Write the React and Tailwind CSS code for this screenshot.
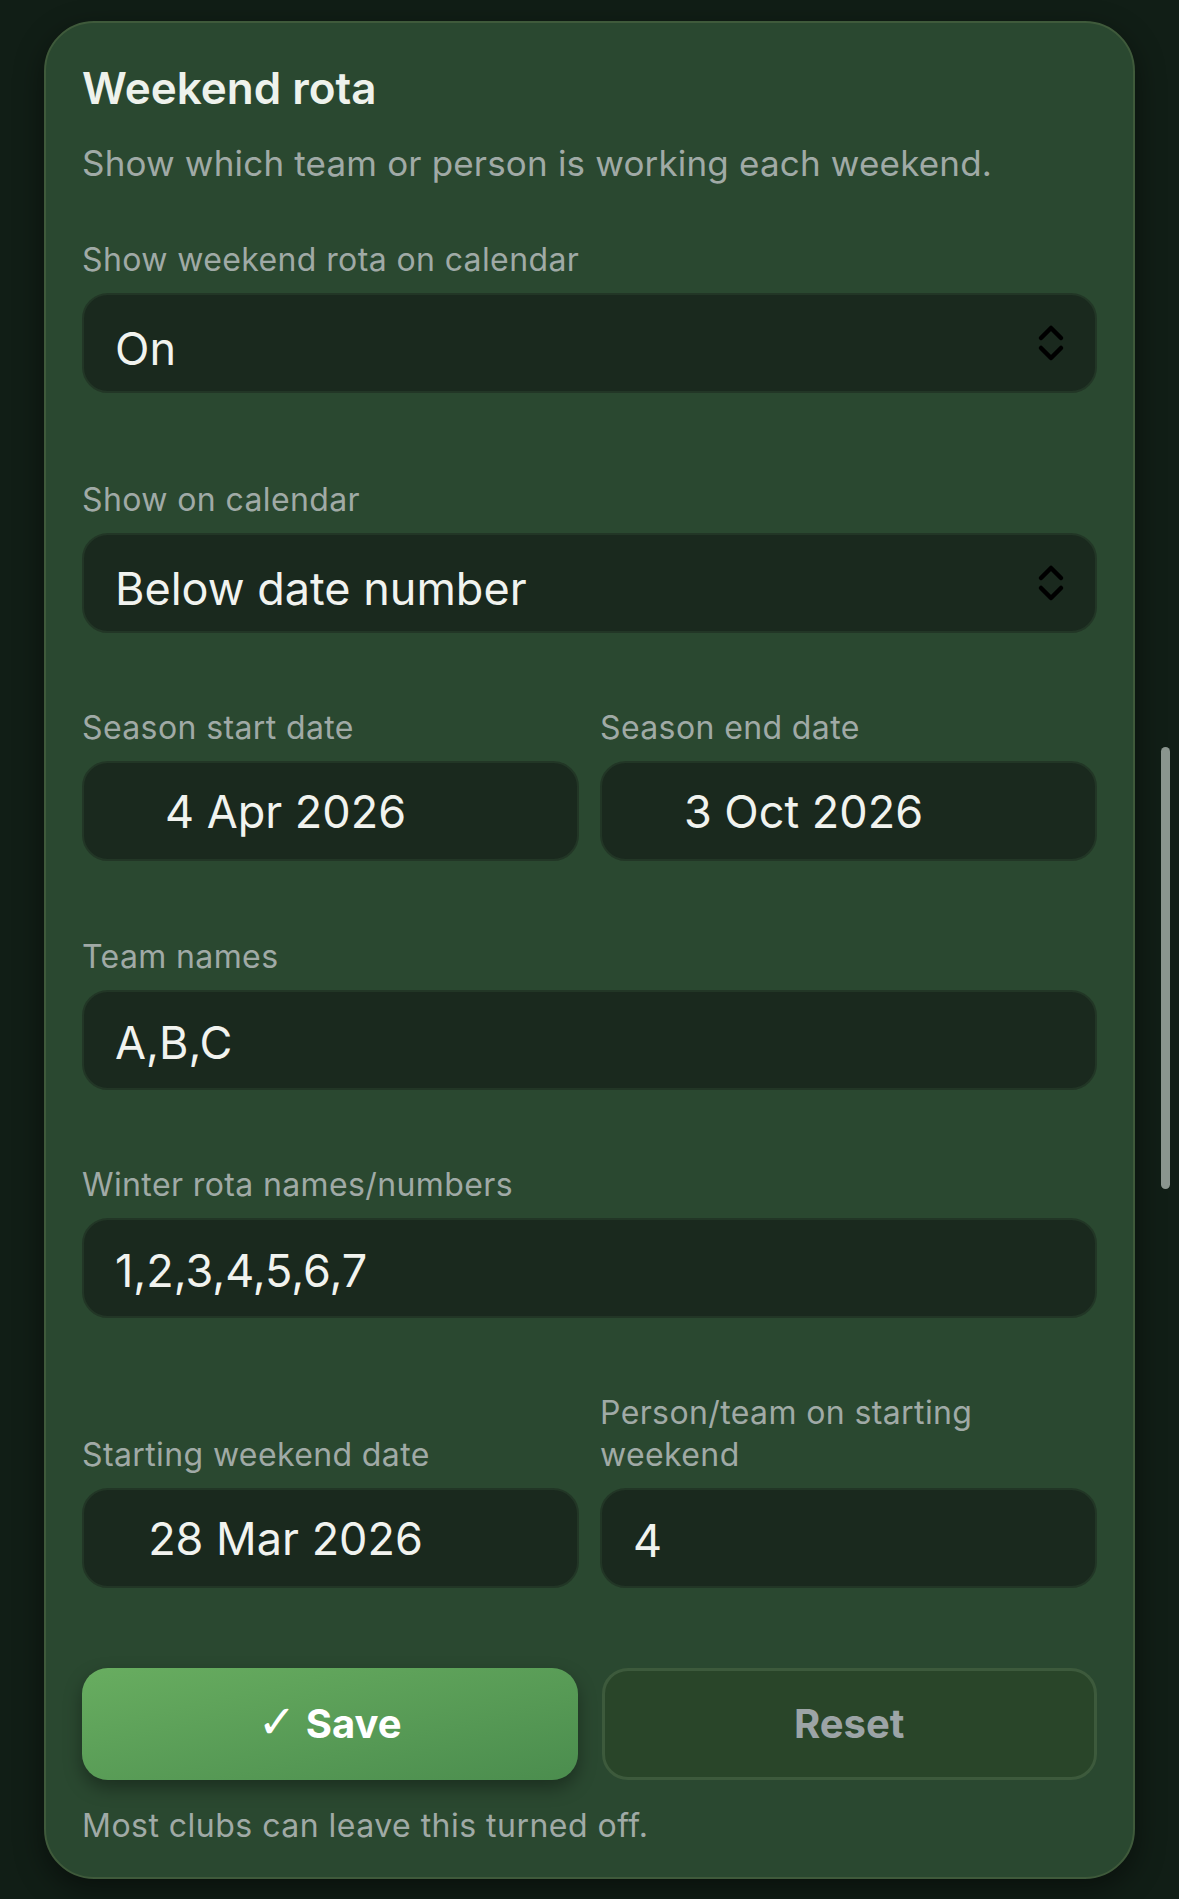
import React from 'react';

const Chevrons = () => (
  <svg width="28" height="42" viewBox="0 0 28 42" fill="none" stroke="#000" strokeWidth="4.5" strokeLinecap="round" strokeLinejoin="round">
    <path d="M4 16 L14 6 L24 16" />
    <path d="M4 26 L14 36 L24 26" />
  </svg>
);

const Label = ({ children, className = '' }) => (
  <div className={`text-[32px] leading-[42px] tracking-[0.012em] text-[#a0aaa6] ${className}`}>{children}</div>
);

const Box = ({ children, className = '' }) => (
  <div className={`h-[100px] rounded-[26px] bg-[#1a291e] border-2 border-[#223626] flex items-center text-[45px] text-[#f1f3ef] ${className}`}>
    {children}
  </div>
);

const SelectField = ({ label, value, className = '' }) => (
  <div className={className}>
    <Label>{label}</Label>
    <Box className="mt-[12px] pl-[31px] pr-[30px] justify-between">
      <span className="pt-[12px]">{value}</span>
      <Chevrons />
    </Box>
  </div>
);

const DateBox = ({ value }) => (
  <Box className="justify-center pr-[90px]">
    <span className="pt-[2px]">{value}</span>
  </Box>
);

const TextBox = ({ value }) => (
  <Box className="pl-[31px]">
    <span className="pt-[5px]">{value}</span>
  </Box>
);

export default function App() {
  return (
    <div className="relative min-h-[1899px] bg-[#111e16] font-['Inter',sans-serif] pt-[21px] pl-[44px] pr-[44px]">
      {/* Card */}
      <div className="rounded-[50px] bg-[#2a4830] border-2 border-[#3f5a3b] shadow-[0_10px_30px_rgba(0,0,0,0.45)] pt-[40px] pb-[30px] px-[36px]">
        <h2 className="text-[44px] leading-[50px] font-semibold text-[#eef2ec]">Weekend rota</h2>
        <p className="mt-[28px] text-[35px] leading-[44px] tracking-[0.005em] text-[#a0aaa6]">
          Show which team or person is working each weekend.
        </p>

        <SelectField className="mt-[54px]" label="Show weekend rota on calendar" value="On" />
        <SelectField className="mt-[86px]" label="Show on calendar" value="Below date number" />

        {/* Season dates */}
        <div className="mt-[74px] grid grid-cols-2 gap-x-[21px]">
          <div>
            <Label>Season start date</Label>
            <div className="mt-[12px]"><DateBox value="4 Apr 2026" /></div>
          </div>
          <div>
            <Label>Season end date</Label>
            <div className="mt-[12px]"><DateBox value="3 Oct 2026" /></div>
          </div>
        </div>

        <div className="mt-[75px]">
          <Label>Team names</Label>
          <div className="mt-[12px]"><TextBox value="A,B,C" /></div>
        </div>

        <div className="mt-[74px]">
          <Label>Winter rota names/numbers</Label>
          <div className="mt-[12px]"><TextBox value="1,2,3,4,5,6,7" /></div>
        </div>

        {/* Starting weekend */}
        <div className="mt-[74px] grid grid-cols-2 gap-x-[21px]">
          <div className="flex flex-col justify-end">
            <Label>Starting weekend date</Label>
            <div className="mt-[12px]"><DateBox value="28 Mar 2026" /></div>
          </div>
          <div className="flex flex-col justify-end">
            <Label>Person/team on starting weekend</Label>
            <div className="mt-[12px]"><TextBox value="4" /></div>
          </div>
        </div>

        {/* Buttons */}
        <div className="mt-[80px] grid grid-cols-2 gap-x-[24px]">
          <button className="h-[112px] rounded-[26px] bg-gradient-to-br from-[#68ad60] to-[#4b8d4e] shadow-[0_8px_18px_rgba(0,0,0,0.35)] text-[40px] font-bold text-white">
            <span className="font-['DejaVu_Sans',sans-serif] font-normal text-[46px] leading-none">✓</span> Save
          </button>
          <button className="h-[112px] rounded-[26px] border-[3px] border-[#3d5a3c] bg-[#294529] text-[40px] font-bold text-[#9ca4a6]">
            Reset
          </button>
        </div>

        <p className="mt-[25px] text-[32px] leading-[42px] tracking-[0.015em] text-[#a0aaa6]">
          Most clubs can leave this turned off.
        </p>
      </div>

      {/* overlay scrollbar */}
      <div className="absolute left-[1161px] top-[747px] w-[9px] h-[442px] rounded-full bg-[#8a958e]" />
    </div>
  );
}
